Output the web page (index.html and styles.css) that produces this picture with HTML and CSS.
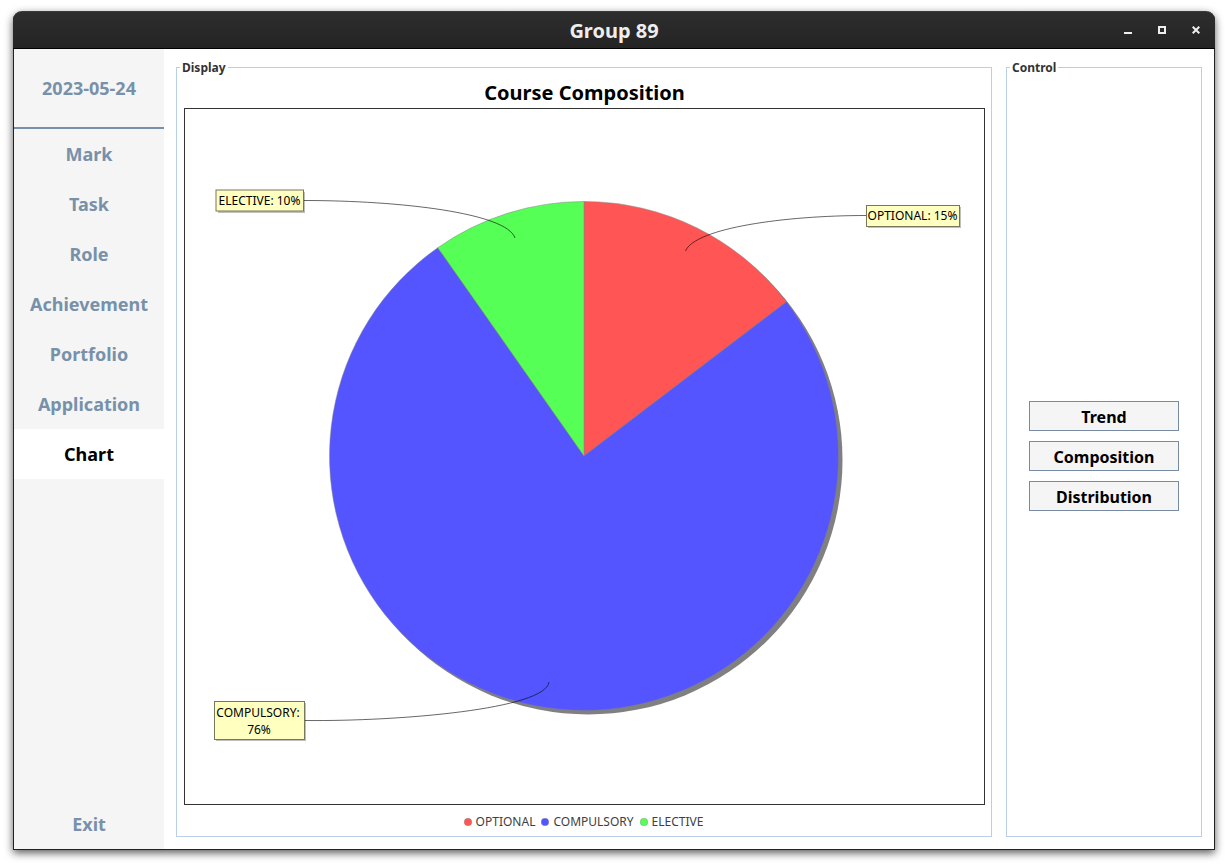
FILE: index.html
```html
<!DOCTYPE html>
<html lang="en">
<head>
<meta charset="utf-8">
<title>Group 89</title>
<link rel="stylesheet" href="styles.css">
</head>
<body>
<div class="window">
  <header class="titlebar">
    <h1 class="titlebar-text">Group 89</h1>
    <div class="window-controls">
      <button type="button" class="window-button" aria-label="Minimize"><svg viewBox="0 0 8 8"><path d="M0 7H8" stroke-width="2"/></svg></button>
      <button type="button" class="window-button" aria-label="Maximize"><svg viewBox="0 0 8 8"><path d="M1 1H7V7H1Z" stroke-width="2"/></svg></button>
      <button type="button" class="window-button" aria-label="Close"><svg viewBox="0 0 8 8"><path d="M0.7 0.7L7.3 7.3M7.3 0.7L0.7 7.3" stroke-width="2"/></svg></button>
    </div>
  </header>
  <div class="body">
    <nav class="sidebar">
      <time class="date" datetime="2023-05-24">2023-05-24</time>
      <button type="button" class="nav-item">Mark</button>
      <button type="button" class="nav-item">Task</button>
      <button type="button" class="nav-item">Role</button>
      <button type="button" class="nav-item">Achievement</button>
      <button type="button" class="nav-item">Portfolio</button>
      <button type="button" class="nav-item">Application</button>
      <button type="button" class="nav-item nav-item-active" aria-current="page">Chart</button>
      <button type="button" class="nav-item nav-exit">Exit</button>
    </nav>
    <main class="main">
      <fieldset class="panel display">
        <legend class="panel-title">Display</legend>
        <h2 class="chart-title">Course Composition</h2>
        <div class="plot">
          <svg class="pie" viewBox="0 0 799 695" role="img" aria-label="Course Composition pie chart">
            <circle class="shadow" cx="403" cy="351" r="254.5"/>
            <g class="slices">
              <path class="optional" d="M399 347V92.500A254.500 254.500 0 0 1 601.500 192.800Z"/>
              <path class="compulsory" d="M399 347L601.500 192.800A254.500 254.500 0 1 1 252.800 138.700Z"/>
              <path class="elective" d="M399 347L252.800 138.700A254.500 254.500 0 0 1 399 92.500Z"/>
            </g>
            <g class="links">
              <path d="M119 91.500C215 91.500 322 104 330 129"/>
              <path d="M681 106.500C600 106.500 510 119 500.500 142"/>
              <path d="M120 611.500C215 612.500 361 600 364 573"/>
            </g>
            <g class="label-shadows">
              <rect x="33" y="83" width="87" height="21"/>
              <rect x="683" y="98" width="93" height="21"/>
              <rect x="31" y="594" width="90" height="38"/>
            </g>
            <g class="label-boxes">
              <rect x="31" y="81" width="87.500" height="21"/>
              <rect x="681.500" y="96.500" width="93" height="21"/>
              <rect x="29.500" y="592.500" width="90" height="38"/>
            </g>
            <g class="label-text">
              <text x="74.500" y="96">ELECTIVE: 10%</text>
              <text x="727.500" y="111">OPTIONAL: 15%</text>
              <text x="73" y="608">COMPULSORY:</text>
              <text x="74" y="625">76%</text>
            </g>
          </svg>
        </div>
        <ul class="key">
          <li class="key-item"><svg class="dot optional" viewBox="0 0 8 8"><circle cx="4" cy="4" r="3.8"/></svg>OPTIONAL</li>
          <li class="key-item"><svg class="dot compulsory" viewBox="0 0 8 8"><circle cx="4" cy="4" r="3.8"/></svg>COMPULSORY</li>
          <li class="key-item"><svg class="dot elective" viewBox="0 0 8 8"><circle cx="4" cy="4" r="3.8"/></svg>ELECTIVE</li>
        </ul>
      </fieldset>
      <fieldset class="panel control">
        <legend class="panel-title">Control</legend>
        <div class="actions">
          <button type="button" class="action">Trend</button>
          <button type="button" class="action">Composition</button>
          <button type="button" class="action">Distribution</button>
        </div>
      </fieldset>
    </main>
  </div>
</div>
</body>
</html>
```
FILE: styles.css
```css
* {
  box-sizing: border-box;
}

body {
  margin: 0;
  padding: 11px 13px 16px;
  min-height: 100vh;
  display: flex;
  background: #fff;
  font-family: "Noto Sans", "Open Sans", sans-serif;
}

button {
  font-family: inherit;
  font-weight: 700;
  margin: 0;
  padding: 0;
}

.window {
  flex: 1;
  display: flex;
  flex-direction: column;
  border: 1px solid #222;
  border-top: 0;
  border-radius: 9px 9px 0 0;
  background: #fff;
  box-shadow: 0 3px 9px rgba(0, 0, 0, 0.65);
}

.titlebar {
  display: grid;
  grid-template-columns: 1fr auto 1fr;
  align-items: center;
  height: 38px;
  margin: 0 -1px;
  padding: 0 9px;
  border-top: 1px solid #3a3a3a;
  border-bottom: 1px solid #000;
  border-radius: 9px 9px 0 0;
  background: linear-gradient(#2d2d2d, #242424);
}

.titlebar-text {
  grid-column: 2;
  margin: 0;
  padding-top: 2px;
  font-size: 20px;
  line-height: 28px;
  font-weight: 700;
  color: #eeeeec;
}

.window-controls {
  display: flex;
  justify-content: flex-end;
  gap: 14px;
}

.window-button {
  display: grid;
  place-items: center;
  width: 20px;
  height: 20px;
  border: 0;
  background: none;
}

.window-button svg {
  width: 8px;
  height: 8px;
  fill: none;
  stroke: #eeeeec;
}

.body {
  flex: 1;
  display: flex;
}

.sidebar {
  width: 150px;
  display: flex;
  flex-direction: column;
  background: #f5f5f5;
  color: #7891aa;
  font-size: 18px;
  font-weight: 700;
}

.date {
  height: 80px;
  display: grid;
  place-items: center;
  border-bottom: 2px solid #7891aa;
}

.nav-item {
  height: 50px;
  border: 0;
  background: none;
  color: inherit;
  font-size: 18px;
}

.nav-item-active {
  background: #fff;
  color: #000;
}

.nav-exit {
  margin-top: auto;
}

.main {
  flex: 1;
  display: flex;
  gap: 14px;
  padding: 11px 12px 12px;
}

.panel {
  display: flex;
  flex-direction: column;
  min-width: 0;
  margin: 0;
  border: 1px solid #b8cfe5;
}

.panel-title {
  margin-left: 3px;
  padding: 0 2px;
  font-size: 12px;
  line-height: 15px;
  font-weight: 700;
  color: #333;
}

.display {
  flex: 1;
  padding: 0 6px 0 7px;
}

.display .panel-title {
  margin-left: -4px;
}

.chart-title {
  margin: 0;
  padding-top: 3px;
  font-size: 20px;
  line-height: 30px;
  font-weight: 700;
  text-align: center;
  color: #000;
}

.plot {
  flex: 1;
  display: flex;
  min-height: 0;
  border: 1px solid #333;
}

.pie {
  flex: 1;
  min-width: 0;
}

.optional {
  fill: #f55;
}

.compulsory {
  fill: #55f;
}

.elective {
  fill: #5f5;
}

.shadow {
  fill: #808080;
}

.slices {
  stroke: #808080;
  stroke-width: 0.5;
}

.links {
  fill: none;
  stroke: #000;
  stroke-width: 0.6;
}

.label-shadows {
  fill: #000;
  fill-opacity: 0.25;
}

.label-boxes {
  fill: #ffffc0;
  stroke: #77775c;
}

.label-text {
  font-size: 12px;
  text-anchor: middle;
  fill: #000;
}

.key {
  display: flex;
  justify-content: center;
  align-items: center;
  gap: 6px;
  height: 31px;
  margin: 0;
  padding: 2px 2px 0 0;
  list-style: none;
  font-size: 12px;
  line-height: 16px;
  color: #404040;
}

.key-item {
  display: flex;
  align-items: center;
  gap: 4px;
}

.dot {
  width: 8px;
  height: 8px;
  stroke: #808080;
  stroke-width: 0.4;
}

.control {
  width: 196px;
  padding: 0;
}

.actions {
  flex: 1;
  display: flex;
  flex-direction: column;
  align-items: center;
  justify-content: center;
  gap: 10px;
  padding-top: 1px;
}

.action {
  width: 150px;
  height: 30px;
  padding-top: 2px;
  border: 1px solid #778ca3;
  background: #f5f5f5;
  color: #000;
  font-size: 16px;
}
```
